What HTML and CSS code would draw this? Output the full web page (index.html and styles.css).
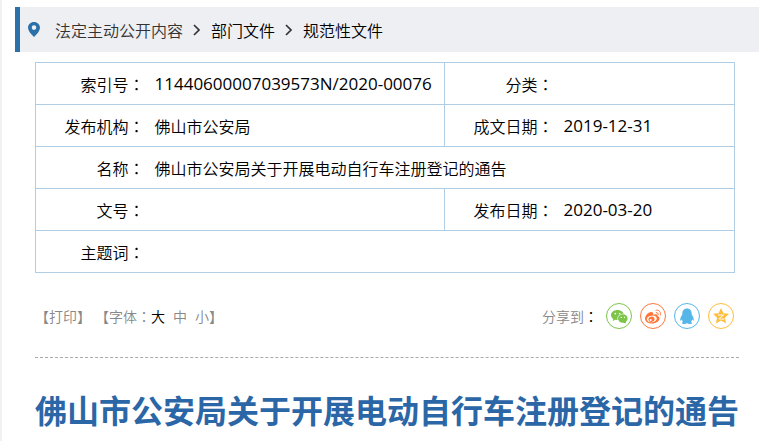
FILE: index.html
```html
<!DOCTYPE html>
<html lang="zh-CN">
<head>
    <meta charset="UTF-8">
    <meta name="viewport" content="width=device-width, initial-scale=1.0">
    <title>佛山市公安局关于开展电动自行车注册登记的通告</title>
    <link rel="stylesheet" href="styles.css">
</head>

<body>
    <nav class="crumbs">
        <svg class="pin" viewBox="0 0 12 15" aria-hidden="true">
            <path fill-rule="evenodd" d="M6 0C2.600 0 0 2.600 0 5.800C0 9 3 12 6 15C9 12 12 9 12 5.800C12 2.600 9.400 0 6 0ZM6 3.300A2.300 2.300 0 1 1 6 7.900A2.300 2.300 0 1 1 6 3.300Z"/>
        </svg>
        <span class="crumb-root">法定主动公开内容</span>
        <svg class="arrow" viewBox="0 0 8 12" aria-hidden="true"><path d="M1 1L6 6L1 11"/></svg>
        <a href="#">部门文件</a>
        <svg class="arrow" viewBox="0 0 8 12" aria-hidden="true"><path d="M1 1L6 6L1 11"/></svg>
        <a href="#">规范性文件</a>
    </nav>

    <main class="content">
        <table class="info">
            <colgroup>
                <col class="col-label">
                <col class="col-main">
                <col class="col-label">
                <col>
            </colgroup>
            <tbody>
                <tr>
                    <th scope="row">索引号<span class="colon">：</span></th>
                    <td class="code">11440600007039573N/2020-00076</td>
                    <th scope="row">分类<span class="colon">：</span></th>
                    <td></td>
                </tr>
                <tr>
                    <th scope="row">发布机构<span class="colon">：</span></th>
                    <td>佛山市公安局</td>
                    <th scope="row">成文日期<span class="colon">：</span></th>
                    <td class="code">2019-12-31</td>
                </tr>
                <tr>
                    <th scope="row">名称<span class="colon">：</span></th>
                    <td colspan="3">佛山市公安局关于开展电动自行车注册登记的通告</td>
                </tr>
                <tr>
                    <th scope="row">文号<span class="colon">：</span></th>
                    <td></td>
                    <th scope="row">发布日期<span class="colon">：</span></th>
                    <td class="code">2020-03-20</td>
                </tr>
                <tr>
                    <th scope="row">主题词<span class="colon">：</span></th>
                    <td colspan="3"></td>
                </tr>
            </tbody>
        </table>

        <div class="tools">
            <div class="tools-left">
                <span>【<button type="button">打印</button>】</span>
                <span class="sizes">
                    <span>【字体<span class="colon">：</span><button type="button" class="on">大</button></span>
                    <button type="button">中</button>
                    <span><button type="button">小</button>】</span>
                </span>
            </div>
            <div class="share">
                <span class="share-label">分享到<b class="colon">：</b></span>
                <a href="#" class="wechat" aria-label="微信">
                    <svg viewBox="0 0 26 26">
                        <path fill="currentColor" d="M11.500 7C7.900 7 5 9.200 5 12C5 13.600 5.900 15 7.300 15.900L6.700 18L9.200 16.700L11.700 17C10.600 13.300 13.500 10.800 17.700 10.800C17 8.600 14.500 7 11.500 7Z"/>
                        <ellipse cx="16.800" cy="15.500" rx="4.800" ry="4.200" fill="currentColor"/>
                        <path fill="currentColor" d="M17 19.500L20 20.500L19.500 18Z"/>
                        <g fill="#fff"><circle cx="9.300" cy="10.600" r="0.900"/><circle cx="13.600" cy="10.600" r="0.900"/><circle cx="15.300" cy="14.400" r="0.700"/><circle cx="18.500" cy="14.400" r="0.700"/></g>
                    </svg>
                </a>
                <a href="#" class="weibo" aria-label="微博">
                    <svg viewBox="0 0 26 26">
                        <path fill="currentColor" d="M11.500 9C9 8.300 5 12.500 5 15.500C5 18.500 8.200 20.500 12 20.500C16.300 20.500 19.500 18 19.500 15.500C19.500 14 18.500 13.300 17.500 13C18.100 11.300 16.500 10.500 13.200 11.800C13.600 10.300 13 9.300 11.500 9Z"/>
                        <ellipse cx="11.800" cy="15.900" rx="5" ry="3.300" fill="#fff" transform="rotate(-8 11.800 15.900)"/>
                        <ellipse cx="11.500" cy="16.200" rx="3.100" ry="2.600" fill="currentColor" transform="rotate(-15 11.500 16.200)"/>
                        <circle cx="10.600" cy="16.900" r="1" fill="#fff"/>
                        <path class="wave" d="M15.500 7.300C19 6.500 21.300 9.300 20.300 12.500M15.800 9.700C17.500 9.300 18.600 10.500 18.100 12"/>
                    </svg>
                </a>
                <a href="#" class="qq" aria-label="QQ">
                    <svg viewBox="0 0 26 26">
                        <path fill="currentColor" d="M13 5.500C10 5.500 8.300 7.800 8.300 10.500V11.500C7 13.300 5.900 15.500 6.200 17.600C6.800 17.800 7.400 17 7.800 16.500C8 17.400 8.400 18.200 9 18.900C7.600 19.500 7.600 21 10 21C11.400 21 12.400 20.700 13 20C13.600 20.700 14.600 21 16 21C18.400 21 18.400 19.500 17 18.900C17.600 18.200 18 17.400 18.200 16.500C18.600 17 19.200 17.800 19.800 17.600C20.100 15.500 19 13.300 17.700 11.500V10.500C17.700 7.800 16 5.500 13 5.500Z"/>
                    </svg>
                </a>
                <a href="#" class="qzone" aria-label="QQ空间">
                    <svg viewBox="0 0 26 26">
                        <path fill="currentColor" d="M13 5L15.400 10.200L21 10.800L16.900 14.700L18.100 20.500L13 17.600L7.900 20.500L9.100 14.700L5 10.800L10.600 10.200Z"/>
                        <path class="zed" d="M10 12H15.500L10.800 15.800C12.500 16.300 14.500 16.300 16.500 15.900"/>
                    </svg>
                </a>
            </div>
        </div>

        <h1>佛山市公安局关于开展电动自行车注册登记的通告</h1>
    </main>
</body>
</html>
```
FILE: styles.css
```css
* { box-sizing: border-box; }
body {
    min-height: 100vh;
    margin: 0;
    padding: 7px 0 0 13px;
    border-left: 2px solid #f1f1f1;
    background-color: #fff;
    color: #000;
    font-family: "Noto Sans CJK SC", sans-serif;
    font-size: 16px;
    font-weight: 350;
    line-height: 24px;
}
a { color: inherit; text-decoration: none; }
button {
    padding: 0;
    border: none;
    background: none;
    color: inherit;
    font: inherit;
    cursor: pointer;
}
/* the Traditional face centres the full-width colon */
.colon {
    font-family: "Noto Sans CJK TC", sans-serif;
    -webkit-locale: "zh-TW";
}
.crumbs {
    display: flex;
    align-items: center;
    gap: 10px;
    height: 45px;
    padding-left: 8px;
    border-left: 5px solid #2b70a8;
    background-color: #eeeff3;
}
.crumb-root { color: #333; }
.pin {
    width: 12px;
    height: 15px;
    margin-right: 5px;
    fill: #2b70a8;
}
.arrow {
    width: 8px;
    height: 12px;
    fill: none;
    stroke: #333;
    stroke-width: 1.7;
}
.content { padding: 10px 20px 0; }
.info {
    width: calc(100% - 4px);
    border-collapse: collapse;
    table-layout: fixed;
}
.info tr {
    height: 42px;
    border: 1px solid #b0cde6;
}
.info th, .info td { padding: 0; }
.info th {
    border-left: 1px solid #b0cde6;
    font-weight: inherit;
    text-align: right;
}
.info td { padding-left: 10px; }
.info .code {
    font-family: "Open Sans", "Noto Sans", sans-serif;
    font-size: 17px;
    font-weight: normal;
}
.col-label { width: 109px; }
.col-main { width: 300px; }
.tools {
    display: flex;
    align-items: center;
    justify-content: space-between;
    height: 85px;
    padding: 2px 5px 0 0;
    border-bottom: 1px dashed #aaa;
    color: #888;
    font-size: 14px;
}
.tools-left, .sizes, .share { display: flex; align-items: center; }
.tools-left { gap: 4px; }
.sizes, .share { gap: 8px; }
.sizes .on { color: #000; }
.share-label b {
    color: #000;
    font-size: 14px;
    font-weight: normal;
}
.share a {
    width: 26px;
    height: 26px;
    border: 1px solid;
    border-radius: 50%;
}
.share svg {
    display: block;
    width: 26px;
    height: 26px;
    margin: -1px;
}
.wechat { color: #7bc549; }
.weibo { color: #ff763b; }
.qq { color: #56b6e7; }
.qzone { color: #fdbe3d; }
.wave, .zed { fill: none; stroke: currentColor; }
.zed { stroke: #fff; }
h1 {
    margin: 27px 0 0;
    color: #2b67a7;
    font-size: 32px;
    line-height: 48px;
    text-align: center;
}
```
